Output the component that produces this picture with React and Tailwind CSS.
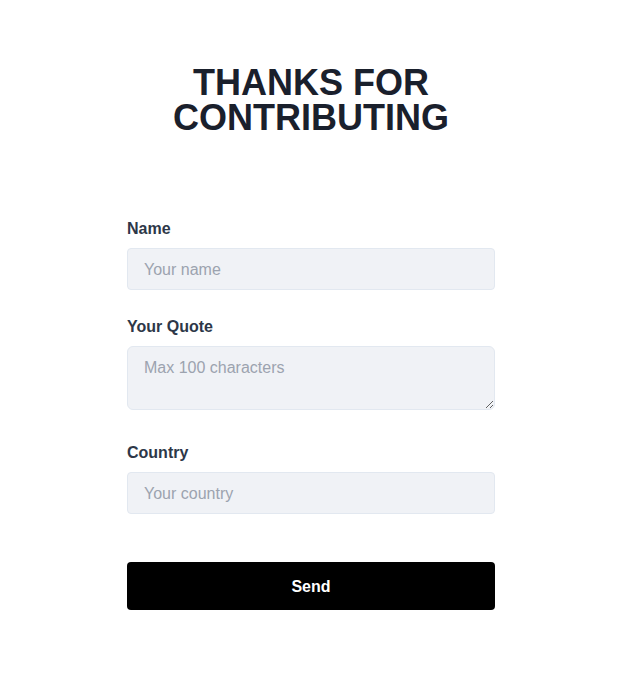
export default function App() {
  return (
    <div className="min-h-[695px] bg-white" style={{ fontFamily: '"Liberation Sans", Arial, sans-serif' }}>
      <div className="ml-[127px] w-[368px] pt-[65px]">
        <h1 className="text-center text-[36px] leading-[35px] font-bold text-[#1a202c]">
          THANKS FOR
          <br />
          CONTRIBUTING
        </h1>
        <form className="mt-[82px] flex flex-col" onSubmit={(e) => e.preventDefault()}>
          <label className="block text-base leading-6 font-bold text-[#2d3748]">Name</label>
          <input
            type="text"
            placeholder="Your name"
            className="mt-[7px] block h-[42px] w-full rounded border border-[#e2e8f0] bg-[#f0f2f6] px-4 pt-[2px] text-base text-gray-800 placeholder:text-[#9ca3af] outline-none"
          />
          <label className="mt-[25px] block text-base leading-6 font-bold text-[#2d3748]">Your Quote</label>
          <textarea
            placeholder="Max 100 characters"
            className="mt-[7px] block h-[64px] w-full rounded-md border border-[#e2e8f0] bg-[#f0f2f6] px-4 pt-[11px] pb-2 text-base leading-5 text-gray-800 placeholder:text-[#9ca3af] outline-none"
          />
          <label className="mt-[31px] block text-base leading-6 font-bold text-[#2d3748]">Country</label>
          <input
            type="text"
            placeholder="Your country"
            className="mt-[7px] block h-[42px] w-full rounded border border-[#e2e8f0] bg-[#f0f2f6] px-4 pt-[2px] text-base text-gray-800 placeholder:text-[#9ca3af] outline-none"
          />
          <button
            type="submit"
            className="mt-12 h-[48px] w-full rounded bg-black pt-[2px] text-base font-bold text-white"
          >
            Send
          </button>
        </form>
      </div>
    </div>
  );
}
